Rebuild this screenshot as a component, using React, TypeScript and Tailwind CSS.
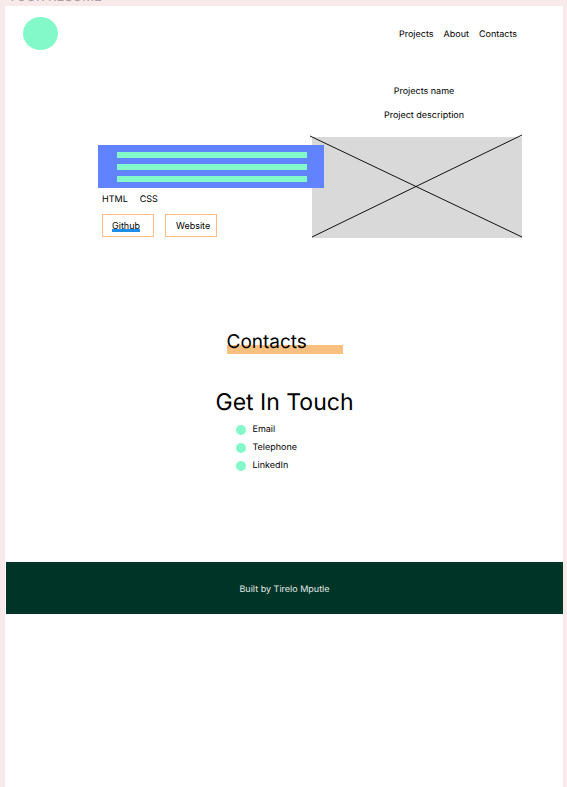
const links = ["Projects", "About", "Contacts"];
const contacts = ["Email", "Telephone", "LinkedIn"];

function Header() {
  return (
    <header className="flex items-start justify-between pt-[11px] pr-[46px] pl-[18px]">
      <div className="h-[33px] w-[35px] rounded-[50%] bg-[#83f9c9]" />
      <nav className="mt-[9px] flex gap-[10px]">
        {links.map((name) => (
          <a key={name} href={"#" + name.toLowerCase()}>
            {name}
          </a>
        ))}
      </nav>
    </header>
  );
}

function Project() {
  return (
    <section id="projects" className="mt-[33px] flex items-end pr-[41px] pl-[93px]">
      <div className="min-w-0 flex-1">
        <div className="relative z-10 -mr-3 flex h-[43px] flex-col justify-center gap-[6px] bg-[#6283ff] pr-[17px] pl-[19px]">
          <div className="h-[6px] bg-[#83f9c9]" />
          <div className="h-[6px] bg-[#83f9c9]" />
          <div className="h-[6px] bg-[#83f9c9]" />
        </div>
        <ul className="mt-[3px] flex gap-3 pl-1">
          <li>HTML</li>
          <li>CSS</li>
        </ul>
        <div className="mt-[5px] mb-px flex gap-[11px] pl-1">
          <button type="button" className="flex h-[23px] w-[52px] items-center border border-[#ffbc80] pl-[9px]">
            <span className="bg-linear-to-r from-[#1e8fe8] to-[#1e8fe8] bg-[length:100%_3px] bg-bottom bg-no-repeat leading-3">
              Github
            </span>
          </button>
          <button type="button" className="flex h-[23px] w-[52px] items-center border border-[#ffbc80] pl-[10px]">
            Website
          </button>
        </div>
      </div>
      <div className="w-[210px] shrink-0">
        <div className="flex flex-col items-center gap-[6px] pb-3 pl-[14px]">
          <h2>Projects name</h2>
          <p>Project description</p>
        </div>
        <svg
          viewBox="0 0 210 101"
          className="block h-[101px] w-full overflow-visible bg-[#d9d9d9]"
          role="img"
          aria-label="Project image"
        >
          <path d="M-2 -1L210 100M0 100L210 -2" stroke="#111" strokeWidth="1" fill="none" />
        </svg>
      </div>
    </section>
  );
}

function Contacts() {
  return (
    <section id="contacts" className="mt-[92px] flex flex-col items-center pl-px">
      <h2 className="w-[116px] bg-linear-to-r from-[#f9c080] to-[#f9c080] bg-[length:100%_9px] bg-bottom bg-no-repeat text-[19px] leading-6">
        Contacts
      </h2>
      <h3 className="mt-8 text-[23px] leading-8">Get In Touch</h3>
      <ul className="mt-[3px] flex w-[98px] flex-col">
        {contacts.map((name) => (
          <li key={name} className="flex items-center gap-[7px]">
            <span className="size-[10px] rounded-full bg-[#83f9c9]" />
            {name}
          </li>
        ))}
      </ul>
    </section>
  );
}

export default function App() {
  return (
    <div className="flex min-h-screen flex-col bg-[#f8eaea] pr-1 pl-[5px] font-['Inter','Liberation_Sans',sans-serif] text-[9px] leading-[18px] text-black [text-rendering:geometricPrecision]">
      <div className="flex h-[6px] items-end pl-[3px] text-[13px] text-[#aaa0a0]">
        YOUR RESUME
      </div>
      <main className="flex-1 bg-white">
        <Header />
        <Project />
        <Contacts />
        <footer id="about" className="mt-[87px] ml-px flex h-[52px] items-center justify-center bg-[#003427] pt-[3px] text-[#e3eae8]">
          Built by Tirelo Mputle
        </footer>
      </main>
    </div>
  );
}
